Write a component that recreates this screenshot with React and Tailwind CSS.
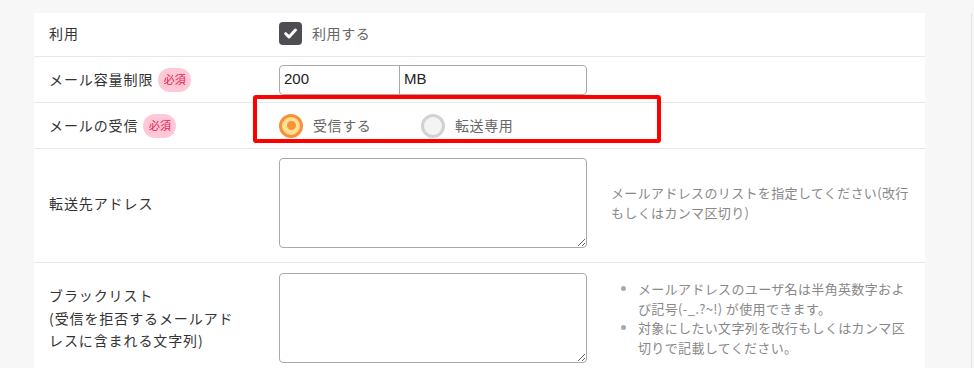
import React from "react";

const font = { fontFamily: '"Noto Sans CJK JP", "Noto Sans", sans-serif' };
const latin = { fontFamily: '"Liberation Sans", "Noto Sans CJK JP", sans-serif' };

function Badge() {
  return (
    <span className="ml-[5px] inline-flex h-[24px] w-[33px] items-center justify-center rounded-full bg-[#ffc8d7] text-[11px] tracking-normal text-[#e8174c]">
      必須
    </span>
  );
}

function Row({ label, children, help, last, pad = "" }) {
  return (
    <div className={`flex items-center ${last ? "" : "border-b border-[#e8e8e8]"} ${pad}`}>
      <div className="flex w-[210px] shrink-0 items-center pl-[15px] text-[14px] leading-[22.5px] tracking-[0.9px] text-[#333]">
        {label}
      </div>
      <div className="shrink-0 pl-[35px]">{children}</div>
      {help ? <div className="flex-1 pl-[24px] pr-[12px]">{help}</div> : null}
    </div>
  );
}

export default function App() {
  return (
    <div className="flex h-[368px] w-[974px] overflow-hidden bg-[#f7f7f7]" style={font}>
      <div className="mt-[13px] ml-[34px] w-[891px] self-start bg-white">
        <Row label={<span className="-mt-[3px]">利用</span>} pad="h-[44px]">
          <div className="-mt-[3px] flex items-center gap-[10px]">
            <span className="flex h-[23px] w-[23px] items-center justify-center rounded-[4px] bg-[#4d4d52]">
              <svg width="15" height="15" viewBox="0 0 14 14">
                <path d="M2.5 7.2 L5.6 10.2 L11.6 3.8" fill="none" stroke="white" strokeWidth="2.8" strokeLinecap="round" strokeLinejoin="round" />
              </svg>
            </span>
            <span className="text-[14px] tracking-[0.6px] text-[#666]">利用する</span>
          </div>
        </Row>
        <Row label={<>メール容量制限<Badge /></>} pad="h-[46px]">
          <div className="flex h-[30px] w-[308px] rounded-[4px] border border-[#aaa] text-[15px] text-[#222]" style={latin}>
            <div className="flex w-[120px] items-center border-r border-[#aaa] pl-[4px]">200</div>
            <div className="flex flex-1 items-center pl-[4px]">MB</div>
          </div>
        </Row>
        <div className="relative">
          <Row label={<>メールの受信<Badge /></>} pad="h-[46px]">
            <div className="flex items-center">
              <div className="flex w-[142px] items-center gap-[10px]">
                <span className="flex h-[24px] w-[24px] items-center justify-center rounded-full border-[3px] border-[#f6923d] bg-[#ffe08d]">
                  <span className="h-[9px] w-[9px] rounded-full bg-[#f6923d]" />
                </span>
                <span className="text-[14px] tracking-[0.6px] text-[#666]">受信する</span>
              </div>
              <div className="flex items-center gap-[10px]">
                <span className="h-[24px] w-[24px] rounded-full border-[3px] border-[#d2d2d2] bg-[#f4f4f7]" />
                <span className="text-[14px] tracking-[0.6px] text-[#666]">転送専用</span>
              </div>
            </div>
          </Row>
          <div className="pointer-events-none absolute top-[-8px] left-[219px] h-[48px] w-[408px] rounded-[3px] border-[4px] border-[#ff0000]" />
        </div>
        <Row
          label="転送先アドレス"
          pad="pt-[9px] pb-[14px]"
          help={
            <p className="text-[13px] leading-[20px] tracking-[0.35px] text-[#888]">
              メールアドレスのリストを指定してください(改行もしくはカンマ区切り)
            </p>
          }
        >
          <textarea className="block h-[90px] w-[308px] rounded-[4px] border border-[#aaa] bg-white" />
        </Row>
        <Row
          label={<span>ブラックリスト<br />(受信を拒否するメールアドレスに含まれる文字列)</span>}
          pad="pt-[10px] pb-[14px]"
          last
          help={
            <ul className="list-disc pr-[3px] pl-[27px] text-[13px] leading-[19.5px] tracking-[0.35px] text-[#888] marker:text-[#aaa]">
              <li>メールアドレスのユーザ名は半角英数字および記号(-_.?~!) が使用できます。</li>
              <li>対象にしたい文字列を改行もしくはカンマ区切りで記載してください。</li>
            </ul>
          }
        >
          <textarea className="block h-[90px] w-[308px] rounded-[4px] border border-[#aaa] bg-white" />
        </Row>
      </div>
      <div className="mt-[13px] ml-[46px] w-px self-stretch bg-[#e4e4e4]" />
    </div>
  );
}
